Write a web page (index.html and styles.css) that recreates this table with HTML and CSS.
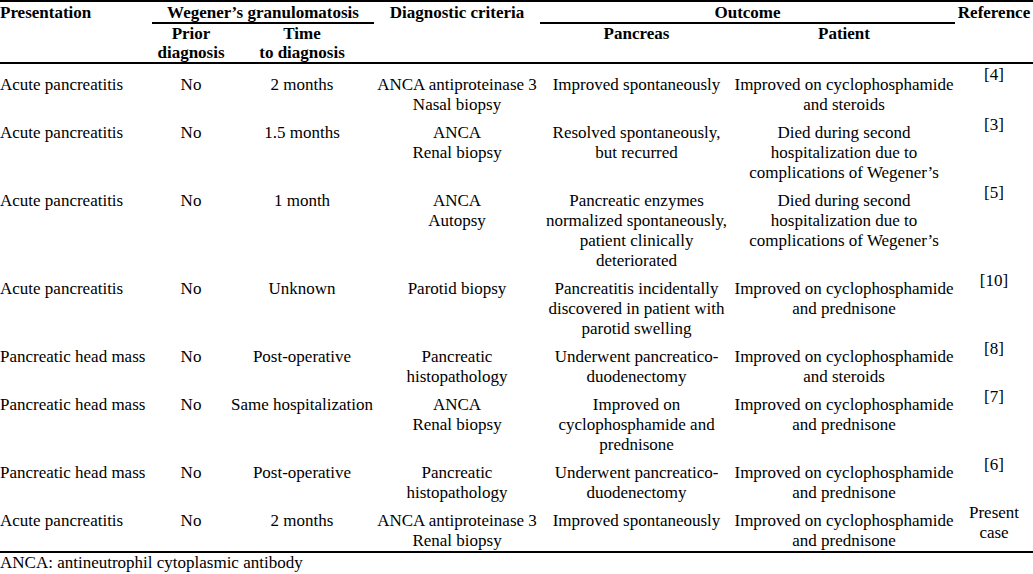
FILE: index.html
```html
<!DOCTYPE html>
<html>
<head>
<meta charset="utf-8">
<link rel="stylesheet" href="styles.css">
</head>
<body>
<table class="tbl">
  <colgroup>
    <col class="c1"><col class="c2"><col class="c3"><col class="c4"><col class="c5"><col class="c6"><col class="c7">
  </colgroup>
  <thead>
    <tr class="h1">
      <th rowspan="2" class="left hb">Presentation</th>
      <th colspan="2" class="ul">Wegener’s granulomatosis</th>
      <th rowspan="2" class="hb">Diagnostic criteria</th>
      <th colspan="2" class="ul">Outcome</th>
      <th rowspan="2" class="hb">Reference</th>
    </tr>
    <tr class="h2">
      <th class="hb">Prior<br>diagnosis</th>
      <th class="hb">Time<br>to diagnosis</th>
      <th class="hb">Pancreas</th>
      <th class="hb">Patient</th>
    </tr>
  </thead>
  <tbody>
    <tr class="first">
      <td class="left">Acute pancreatitis</td>
      <td>No</td>
      <td>2 months</td>
      <td>ANCA antiproteinase 3<br>Nasal biopsy</td>
      <td>Improved spontaneously</td>
      <td>Improved on cyclophosphamide<br>and steroids</td>
      <td class="ref">[4]</td>
    </tr>
    <tr>
      <td class="left">Acute pancreatitis</td>
      <td>No</td>
      <td>1.5 months</td>
      <td>ANCA<br>Renal biopsy</td>
      <td>Resolved spontaneously,<br>but recurred</td>
      <td>Died during second<br>hospitalization due to<br>complications of Wegener’s</td>
      <td class="ref">[3]</td>
    </tr>
    <tr>
      <td class="left">Acute pancreatitis</td>
      <td>No</td>
      <td>1 month</td>
      <td>ANCA<br>Autopsy</td>
      <td>Pancreatic enzymes<br>normalized spontaneously,<br>patient clinically<br>deteriorated</td>
      <td>Died during second<br>hospitalization due to<br>complications of Wegener’s</td>
      <td class="ref">[5]</td>
    </tr>
    <tr>
      <td class="left">Acute pancreatitis</td>
      <td>No</td>
      <td>Unknown</td>
      <td>Parotid biopsy</td>
      <td>Pancreatitis incidentally<br>discovered in patient with<br>parotid swelling</td>
      <td>Improved on cyclophosphamide<br>and prednisone</td>
      <td class="ref">[10]</td>
    </tr>
    <tr>
      <td class="left">Pancreatic head mass</td>
      <td>No</td>
      <td>Post-operative</td>
      <td>Pancreatic<br>histopathology</td>
      <td>Underwent pancreatico-<br>duodenectomy</td>
      <td>Improved on cyclophosphamide<br>and steroids</td>
      <td class="ref">[8]</td>
    </tr>
    <tr>
      <td class="left">Pancreatic head mass</td>
      <td>No</td>
      <td>Same hospitalization</td>
      <td>ANCA<br>Renal biopsy</td>
      <td>Improved on<br>cyclophosphamide and<br>prednisone</td>
      <td>Improved on cyclophosphamide<br>and prednisone</td>
      <td class="ref">[7]</td>
    </tr>
    <tr>
      <td class="left">Pancreatic head mass</td>
      <td>No</td>
      <td>Post-operative</td>
      <td>Pancreatic<br>histopathology</td>
      <td>Underwent pancreatico-<br>duodenectomy</td>
      <td>Improved on cyclophosphamide<br>and prednisone</td>
      <td class="ref">[6]</td>
    </tr>
    <tr>
      <td class="left">Acute pancreatitis</td>
      <td>No</td>
      <td>2 months</td>
      <td>ANCA antiproteinase 3<br>Renal biopsy</td>
      <td>Improved spontaneously</td>
      <td>Improved on cyclophosphamide<br>and prednisone</td>
      <td class="ref">Present<br>case</td>
    </tr>
  </tbody>
</table>
<p class="note">ANCA: antineutrophil cytoplasmic antibody</p>
</body>
</html>
```

FILE: styles.css
```css
html, body {
  margin: 0;
  padding: 0;
  background: #ffffff;
}
body {
  font-family: "Liberation Serif", "Times New Roman", serif;
  font-size: 17px;
  color: #000000;
}
.tbl {
  width: 1033px;
  table-layout: fixed;
  border-collapse: separate;
  border-spacing: 0;
  border-top: 2px solid #000;
  border-bottom: 2px solid #000;
}
.c1 { width: 152px; }
.c2 { width: 78px; }
.c3 { width: 144px; }
.c4 { width: 166px; }
.c5 { width: 193px; }
.c6 { width: 222px; }
.c7 { width: 78px; }
th, td {
  padding: 0;
  text-align: center;
  vertical-align: top;
  white-space: nowrap;
  line-height: 20px;
}
th {
  font-weight: bold;
}
.h1 th {
  line-height: 19px;
  padding-top: 1px;
}
.h2 th {
  line-height: 19px;
}
.ul {
  border-bottom: 2px solid #000;
}
.hb {
  border-bottom: 2px solid #000;
}
.left {
  text-align: left;
}
td {
  padding-top: 8px;
}
.first td {
  padding-top: 11px;
}
td.ref {
  padding-top: 0;
}
.first td.ref {
  padding-top: 1px;
}
.note {
  margin: 0;
  line-height: 20px;
}
```
